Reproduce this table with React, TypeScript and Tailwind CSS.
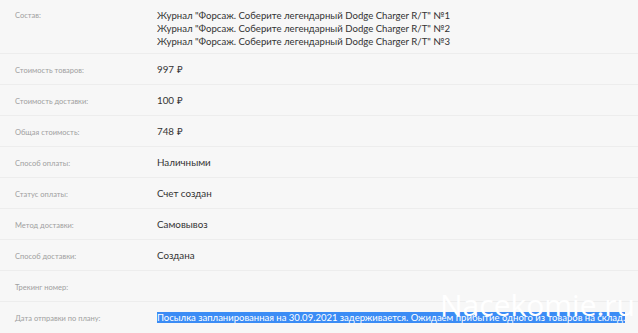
import React from "react";

const rows: { label: string; value: React.ReactNode }[] = [
  { label: "Стоимость товаров:", value: "997 ₽" },
  { label: "Стоимость доставки:", value: "100 ₽" },
  { label: "Общая стоимость:", value: "748 ₽" },
  { label: "Способ оплаты:", value: "Наличными" },
  { label: "Статус оплаты:", value: "Счет создан" },
  { label: "Метод доставки:", value: "Самовывоз" },
  { label: "Способ доставки:", value: "Создана" },
  { label: "Трекинг номер:", value: "" },
];

export default function App() {
  return (
    <div
      className="relative w-[638px] h-[333px] overflow-hidden bg-[#f7f7f7] text-[#333]"
      style={{ fontFamily: "Lato, 'Open Sans', sans-serif" }}
    >
      <div className="flex border-b border-[#ededed] h-[54px] pt-[9px]">
        <div className="w-[157px] pl-[15px] text-[7.5px] text-[#a0a0a0] leading-[13px]">Состав:</div>
        <div className="text-[9.6px] leading-[13px]">
          <div>Журнал "Форсаж. Соберите легендарный Dodge Charger R/T" №1</div>
          <div>Журнал "Форсаж. Соберите легендарный Dodge Charger R/T" №2</div>
          <div>Журнал "Форсаж. Соберите легендарный Dodge Charger R/T" №3</div>
        </div>
      </div>
      {rows.map((r) => (
        <div key={r.label} className="flex items-center h-[31px] border-b border-[#ededed]">
          <div className="w-[157px] pl-[15px] text-[7.5px] text-[#a0a0a0] leading-[13px] pt-[2px]">{r.label}</div>
          <div className="text-[9.8px] leading-[13px]">{r.value || "\u00a0"}</div>
        </div>
      ))}
      <div className="flex items-center h-[31px]">
        <div className="w-[157px] pl-[15px] text-[7.5px] text-[#a0a0a0] shrink-0 leading-[13px] pt-[2px]">Дата отправки по плану:</div>
        <div className="text-[9.5px] leading-[17px] whitespace-nowrap">
          <span className="bg-[#3b8cf5] text-white">
            Посылка запланированная на 30.09.2021 задерживается. Ожидаем прибытие одного из товаров на склад.
          </span>
        </div>
      </div>
      <div
        className="absolute left-[440px] top-[290px] text-[30px] text-white leading-none"
        style={{ fontFamily: "'Open Sans', sans-serif" }}
      >
        Nacekomie.ru
      </div>
    </div>
  );
}
